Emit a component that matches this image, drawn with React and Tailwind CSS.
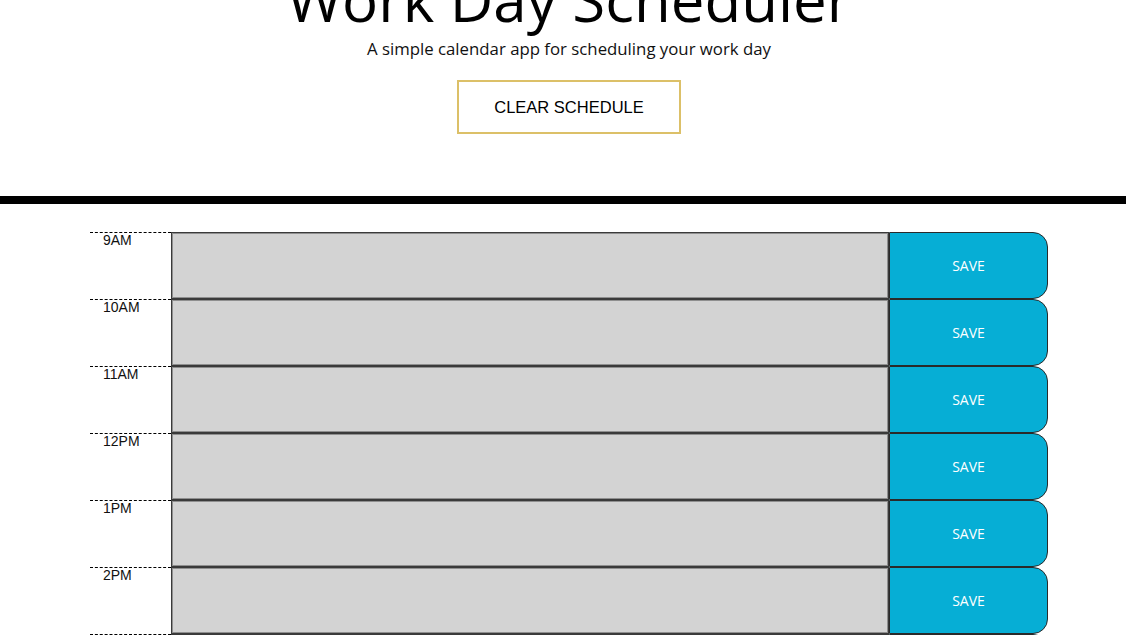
const hours = ['9AM', '10AM', '11AM', '12PM', '1PM', '2PM', '3PM']

function HourRow({ label }) {
  return (
    <div className="flex h-[67px]">
      {/* hour label with dashed top rule */}
      <div className="w-[81px] shrink-0 border-t border-dashed border-black pl-[13px] font-['Liberation_Sans',sans-serif] text-[14px] leading-[15px] text-[#111]">
        {label}
      </div>
      <textarea className="flex-1 resize-none border border-[#3a3a3a] bg-[#d3d3d3] shadow-[inset_0_0_0_1px_#8f8f8f] outline-none" />
      <button className="w-[159px] shrink-0 rounded-r-[15px] border border-[#2a2a2a] bg-[#06aed5] text-[14px] text-white">
        SAVE
      </button>
    </div>
  )
}

export default function App() {
  return (
    <div className="min-h-screen overflow-hidden bg-white font-['Open_Sans',sans-serif]">
      {/* header, scrolled so the title is cut at the top */}
      <header className="flex flex-col items-center border-b-[8px] border-black pb-[62px] pl-[12px]">
        <h1 className="mt-[-37px] text-[60px] font-normal leading-[72px] text-black">Work Day Scheduler</h1>
        <p className="mt-[1px] text-[16.8px] leading-[25px] text-[#111]">
          A simple calendar app for scheduling your work day
        </p>
        <button className="mt-[19px] h-[54px] w-[224px] border-2 border-[#dcc068] bg-white font-['Liberation_Sans',sans-serif] text-[16.5px] text-black">
          CLEAR SCHEDULE
        </button>
      </header>

      <main className="ml-[90px] mt-[28px] w-[958px]">
        {hours.map(h => (
          <HourRow key={h} label={h} />
        ))}
      </main>
    </div>
  )
}
